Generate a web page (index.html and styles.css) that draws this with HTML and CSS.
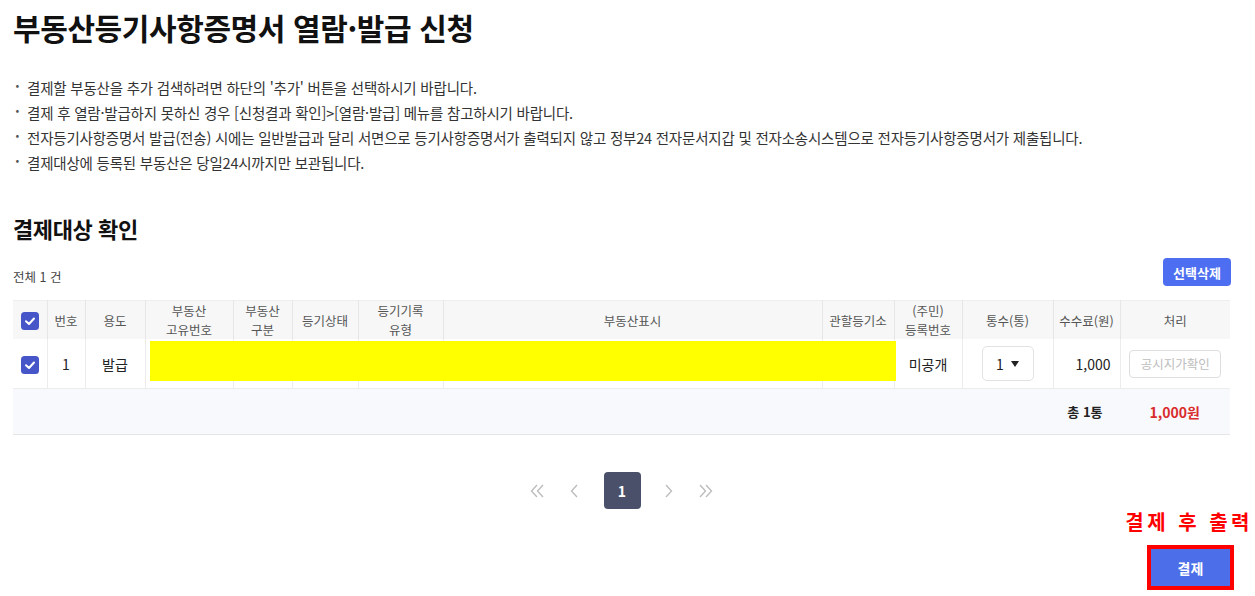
FILE: index.html
```html
<!DOCTYPE html>
<html lang="ko">
<head>
<meta charset="utf-8">
<title>부동산등기사항증명서 열람·발급 신청</title>
<link rel="stylesheet" href="styles.css">
</head>
<body>
<div class="page">
  <h1 class="title">부동산등기사항증명서 열람·발급 신청</h1>
  <ul class="notes">
    <li>결제할 부동산을 추가 검색하려면 하단의 '추가' 버튼을 선택하시기 바랍니다.</li>
    <li>결제 후 열람·발급하지 못하신 경우 [신청결과 확인]&gt;[열람·발급] 메뉴를 참고하시기 바랍니다.</li>
    <li>전자등기사항증명서 발급(전송) 시에는 일반발급과 달리 서면으로 등기사항증명서가 출력되지 않고 정부24 전자문서지갑 및 전자소송시스템으로 전자등기사항증명서가 제출됩니다.</li>
    <li>결제대상에 등록된 부동산은 당일24시까지만 보관됩니다.</li>
  </ul>

  <h2 class="subtitle">결제대상 확인</h2>
  <div class="listbar">
    <span class="count">전체 1 건</span>
    <button class="btn-del">선택삭제</button>
  </div>

  <div class="table-wrap">
    <table class="grid">
      <colgroup>
        <col style="width:34px"><col style="width:38px"><col style="width:60px"><col style="width:88px"><col style="width:59px"><col style="width:66px"><col style="width:85px"><col style="width:379px"><col style="width:72px"><col style="width:68px"><col style="width:91px"><col style="width:67px"><col style="width:110px">
      </colgroup>
      <thead>
        <tr>
          <th><span class="chk"><svg viewBox="0 0 18 18" width="18" height="18"><rect x="0" y="0" width="18" height="18" rx="3.5" fill="#4656c9"/><polyline points="5,9.2 8,12 13,6.5" fill="none" stroke="#fff" stroke-width="2" stroke-linecap="round" stroke-linejoin="round"/></svg></span></th>
          <th>번호</th>
          <th>용도</th>
          <th><span class="l2">부동산</span><span class="l2">고유번호</span></th>
          <th><span class="l2">부동산</span><span class="l2">구분</span></th>
          <th>등기상태</th>
          <th><span class="l2">등기기록</span><span class="l2">유형</span></th>
          <th>부동산표시</th>
          <th>관할등기소</th>
          <th><span class="l2">(주민)</span><span class="l2">등록번호</span></th>
          <th>통수(통)</th>
          <th>수수료(원)</th>
          <th class="last">처리</th>
        </tr>
      </thead>
      <tbody>
        <tr>
          <td><span class="chk"><svg viewBox="0 0 18 18" width="18" height="18"><rect x="0" y="0" width="18" height="18" rx="3.5" fill="#4656c9"/><polyline points="5,9.2 8,12 13,6.5" fill="none" stroke="#fff" stroke-width="2" stroke-linecap="round" stroke-linejoin="round"/></svg></span></td>
          <td class="num">1</td>
          <td class="use">발급</td>
          <td></td>
          <td></td>
          <td></td>
          <td></td>
          <td></td>
          <td></td>
          <td class="use">미공개</td>
          <td><span class="sel">1 <span class="arrow"></span></span></td>
          <td class="fee">1,000</td>
          <td class="last"><button class="btn-price">공시지가확인</button></td>
        </tr>
      </tbody>
    </table>
    <div class="mask"></div>
    <div class="total">
      <span class="total-cnt">총 1통</span>
      <span class="total-sum">1,000원</span>
    </div>
  </div>

  <nav class="pager">
    <span class="pg"><svg width="16" height="14" viewBox="0 0 16 14"><polyline points="7,1 1.5,7 7,13" fill="none" stroke="#bdbdbd" stroke-width="1.4"/><polyline points="13,1 7.5,7 13,13" fill="none" stroke="#bdbdbd" stroke-width="1.4"/></svg></span>
    <span class="pg"><svg width="10" height="14" viewBox="0 0 10 14"><polyline points="7,1 1.5,7 7,13" fill="none" stroke="#bdbdbd" stroke-width="1.4"/></svg></span>
    <span class="pg cur">1</span>
    <span class="pg"><svg width="10" height="14" viewBox="0 0 10 14"><polyline points="3,1 8.5,7 3,13" fill="none" stroke="#bdbdbd" stroke-width="1.4"/></svg></span>
    <span class="pg"><svg width="16" height="14" viewBox="0 0 16 14"><polyline points="3,1 8.5,7 3,13" fill="none" stroke="#bdbdbd" stroke-width="1.4"/><polyline points="9,1 14.5,7 9,13" fill="none" stroke="#bdbdbd" stroke-width="1.4"/></svg></span>
  </nav>

  <div class="pay-area">
    <div class="pay-note">결제 후 출력</div>
    <div class="pay-frame"><button class="btn-pay">결제</button></div>
  </div>
</div>
</body>
</html>
```

FILE: styles.css
```css
* { box-sizing: border-box; }
html, body { margin: 0; padding: 0; background: #fff; }
body {
  font-family: "Noto Sans CJK KR", "Noto Sans", sans-serif;
  color: #222;
  width: 1255px;
  height: 596px;
  overflow: hidden;
}
.page { padding: 0 25px 0 13px; }
.title {
  margin: 7px 0 0;
  font-size: 30px;
  line-height: 40px;
  font-weight: 700;
  letter-spacing: -0.4px;
  color: #111;
}
.notes {
  list-style: none;
  margin: 28px 0 0;
  padding: 0;
}
.notes li {
  position: relative;
  padding-left: 14px;
  font-size: 14.5px;
  line-height: 25px;
  color: #333;
  letter-spacing: -0.2px;
}
.notes li::before {
  content: "·";
  position: absolute;
  left: 2px;
  top: -2px;
  color: #555;
  font-weight: 700;
}
.subtitle {
  margin: 38px 0 0;
  font-size: 22px;
  line-height: 30px;
  font-weight: 700;
  letter-spacing: -0.4px;
  color: #111;
}
.listbar {
  display: flex;
  justify-content: space-between;
  align-items: center;
  margin-top: 15px;
}
.count { font-size: 12.5px; color: #444; padding-top: 8px; }
.btn-del {
  font-family: inherit;
  border: 0;
  background: #4d6ef0;
  color: #fff;
  font-size: 13px;
  font-weight: 700;
  height: 28px;
  width: 68px;
  border-radius: 4px;
  padding: 0;
  margin-right: -1px;
}
.table-wrap { position: relative; margin-top: 14px; width: 1217px; }
.grid {
  border-collapse: collapse;
  table-layout: fixed;
  width: 1217px;
}
.grid th {
  background: #f7f7f7;
  color: #555;
  font-weight: 400;
  font-size: 12.5px;
  line-height: 19px;
  height: 38px;
  padding: 0;
  border-top: 1px solid #eeeeee;
  border-right: 1px solid #e6e6e6;
  text-align: center;
  vertical-align: middle;
}
.l2 { display: block; height: 19px; line-height: 19px; }
.grid td {
  height: 49px;
  padding: 0;
  text-align: center;
  vertical-align: middle;
  border-right: 1px solid #ececec;
  font-size: 14px;
  color: #333;
}
.grid .last { border-right: 0; }
.chk { display: inline-flex; vertical-align: middle; }
.chk svg { display: block; }
.grid td.num { font-size: 14px; color: #222; }
.grid td.use { font-size: 14px; color: #222; }
.grid td.fee { text-align: right; padding-right: 9px; color: #222; }
.sel {
  display: inline-flex;
  align-items: center;
  justify-content: center;
  gap: 7px;
  width: 52px;
  height: 35px;
  border: 1px solid #e2e2e2;
  border-radius: 5px;
  font-size: 14px;
  color: #222;
}
.arrow {
  width: 0; height: 0;
  border-left: 4px solid transparent;
  border-right: 4px solid transparent;
  border-top: 6px solid #222;
}
.btn-price {
  font-family: inherit;
  background: #fff;
  border: 1px solid #dedede;
  border-radius: 4px;
  color: #bdbdbd;
  font-size: 12.5px;
  width: 92px;
  height: 28px;
  padding: 0;
}
.mask {
  position: absolute;
  left: 137px;
  top: 41px;
  width: 746px;
  height: 40px;
  background: #ffff00;
}
.total {
  display: flex;
  justify-content: flex-end;
  align-items: center;
  height: 47px;
  background: #f8f9fc;
  border-top: 1px solid #ececec;
  border-bottom: 1px solid #e6e6e6;
  padding-right: 30px;
  font-weight: 700;
}
.total-cnt { font-size: 13px; color: #222; }
.total-sum { font-size: 14px; color: #d92c2c; margin-left: 47px; }
.pager {
  display: flex;
  justify-content: center;
  align-items: center;
  margin-top: 37px;
}
.pg {
  display: inline-flex;
  align-items: center;
  justify-content: center;
  width: 37px;
  height: 37px;
  font-size: 14px;
}
.pg.cur {
  background: #4a5069;
  color: #fff;
  font-weight: 700;
  border-radius: 4px;
  margin: 0 9px 0 10px;
}
.pay-area {
  display: flex;
  flex-direction: column;
  align-items: flex-end;
  margin-right: -20px;
}
.pay-note {
  color: #f00;
  font-weight: 700;
  font-size: 20px;
  letter-spacing: 3.5px;
  line-height: 26px;
  margin-right: -3px;
}
.pay-frame {
  margin-top: 10px;
  margin-right: 16px;
  border: 4px solid #f00;
}
.btn-pay {
  display: block;
  font-family: inherit;
  border: 0;
  width: 79px;
  height: 37px;
  background: #4c6ee8;
  color: #fff;
  font-size: 14px;
  font-weight: 700;
  padding: 0;
}
```
